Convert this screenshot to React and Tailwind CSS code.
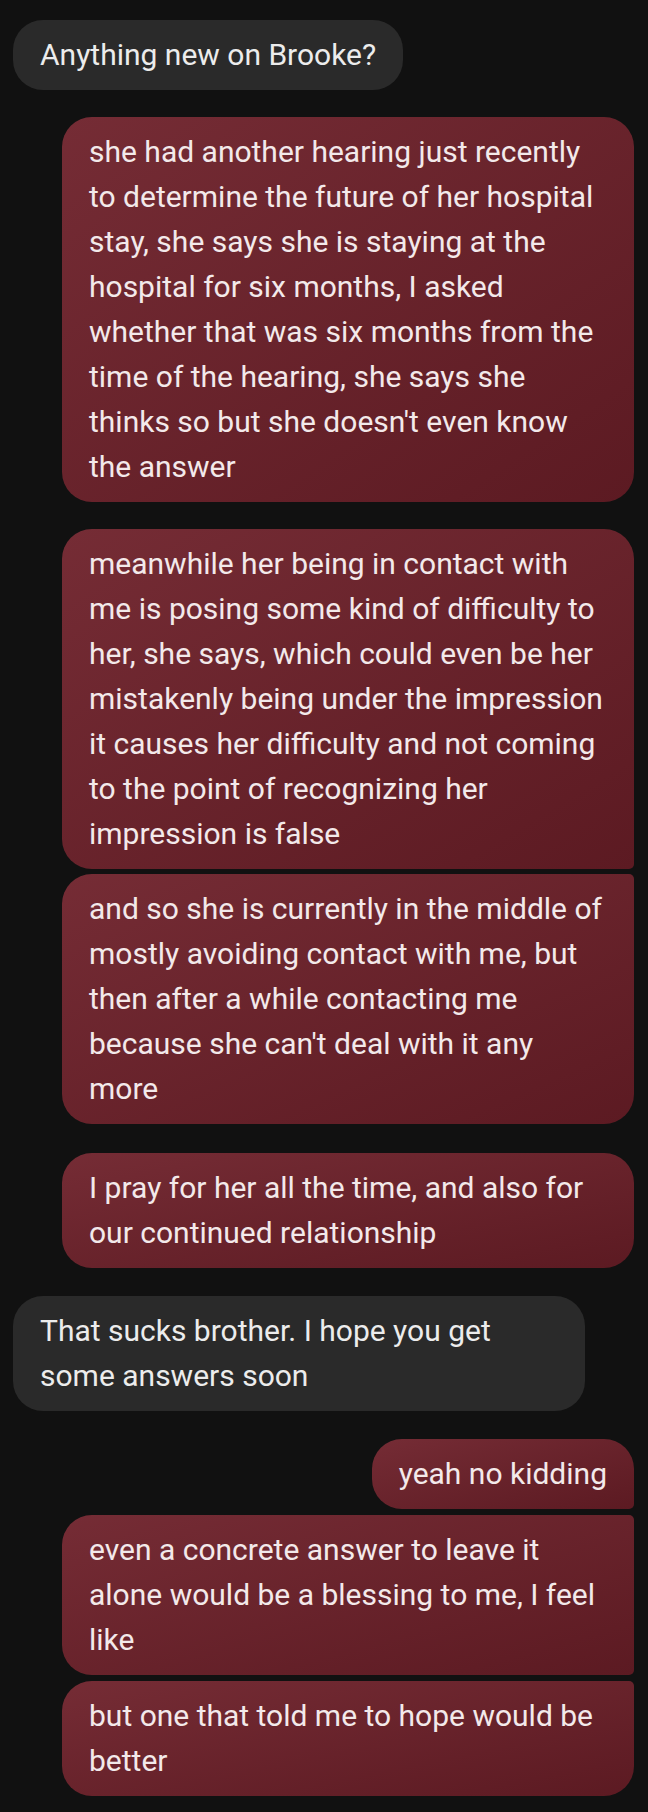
const messages = [
  { from: 'them', text: 'Anything new on Brooke?', mt: 'mt-0', shape: 'rounded-[30px]' },
  {
    from: 'me',
    text: "she had another hearing just recently to determine the future of her hospital stay, she says she is staying at the hospital for six months, I asked whether that was six months from the time of the hearing, she says she thinks so but she doesn't even know the answer",
    mt: 'mt-[27px]',
    shape: 'rounded-[30px]',
  },
  {
    from: 'me',
    text: 'meanwhile her being in contact with me is posing some kind of difficulty to her, she says, which could even be her mistakenly being under the impression it causes her difficulty and not coming to the point of recognizing her impression is false',
    mt: 'mt-[27px]',
    shape: 'rounded-[30px] rounded-br-[5px]',
  },
  {
    from: 'me',
    text: "and so she is currently in the middle of mostly avoiding contact with me, but then after a while contacting me because she can't deal with it any more",
    mt: 'mt-[5px]',
    shape: 'rounded-[30px] rounded-tr-[5px]',
  },
  {
    from: 'me',
    text: 'I pray for her all the time, and also for our continued relationship',
    mt: 'mt-[29px]',
    shape: 'rounded-[30px]',
  },
  {
    from: 'them',
    text: 'That sucks brother. I hope you get some answers soon',
    mt: 'mt-[28px]',
    shape: 'rounded-[30px]',
  },
  { from: 'me', text: 'yeah no kidding', mt: 'mt-[28px]', shape: 'rounded-[30px] rounded-br-[5px]' },
  {
    from: 'me',
    text: 'even a concrete answer to leave it alone would be a blessing to me, I feel like',
    mt: 'mt-[6px]',
    shape: 'rounded-[30px] rounded-tr-[5px] rounded-br-[5px]',
  },
  {
    from: 'me',
    text: 'but one that told me to hope would be better',
    mt: 'mt-[6px]',
    shape: 'rounded-[30px] rounded-tr-[5px]',
  },
];

function Bubble({ from, text, mt, shape }) {
  const mine = from === 'me';
  return (
    <div
      className={`${mt} ${shape} max-w-[572px] px-[27px] pt-[12px] pb-[13px] text-[30px] leading-[45px] ${
        mine
          ? 'self-end bg-gradient-to-br from-[#752c35] to-[#5c1a22] text-[#f3e9ea]'
          : 'self-start bg-[#2a2a2a] text-[#ececec]'
      }`}
    >
      {text}
    </div>
  );
}

export default function App() {
  return (
    <div
      className="min-h-[1812px] bg-[#111111] flex flex-col pl-[13px] pr-[14px] pt-[20px]"
      style={{ fontFamily: 'Roboto, "Noto Sans", sans-serif' }}
    >
      {messages.map((m, i) => (
        <Bubble key={i} {...m} />
      ))}
    </div>
  );
}
